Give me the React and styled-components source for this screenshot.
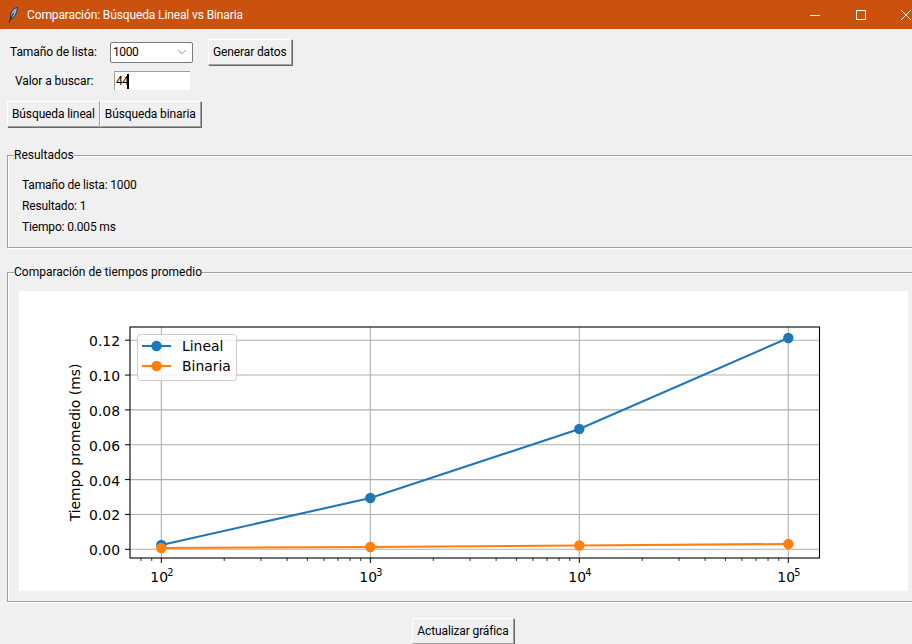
import React from 'react';
import styled, { createGlobalStyle } from 'styled-components';
import { ChevronDown } from 'lucide-react';

const GlobalStyle = createGlobalStyle`
  html, body {
    margin: 0;
    height: 100%;
    overflow: hidden;
    background: #f0f0f0;
  }
`;

const Window = styled.div`
  width: 912px;
  height: 644px;
  overflow: hidden;
  background: #f0f0f0;
  color: #000;
  font-family: Roboto, "Liberation Sans", sans-serif;
  font-size: 12px;
`;

const TitleBar = styled.div`
  height: 29px;
  background: #ca510e;
  color: #fff;
  display: flex;
  align-items: center;
  padding-left: 8px;
  margin-right: -17px;
`;

const TitleText = styled.span`
  margin-left: 9px;
  flex: 1;
  letter-spacing: -0.12px;
`;

const WindowButton = styled.div`
  width: 45.5px;
  height: 29px;
  display: flex;
  align-items: center;
  justify-content: center;
`;

const Controls = styled.div`
  padding: 10px 0 0 7px;
  display: flex;
  flex-direction: column;
`;

const Row = styled.div`
  display: flex;
  align-items: center;
  margin-top: ${(p) => p.$top || 0}px;
`;

const FieldLabel = styled.label`
  box-sizing: border-box;
  width: ${(p) => p.$width}px;
  padding-left: ${(p) => p.$indent}px;
  letter-spacing: -0.08px;
`;

const Combo = styled.div`
  width: 83px;
  height: 21px;
  box-sizing: border-box;
  border: 1px solid #7a7a7a;
  border-radius: 2px;
  background: #fff;
  display: flex;
  align-items: center;
  justify-content: space-between;
  padding: 0 3px 0 2px;
  letter-spacing: -0.4px;
`;

const Button = styled.button`
  height: 26px;
  box-sizing: border-box;
  padding: 0 4px;
  margin-left: ${(p) => p.$left || 0}px;
  font: inherit;
  letter-spacing: -0.12px;
  color: #000;
  background: #f0f0f0;
  border: 1px solid;
  border-color: #fff #a0a0a0 #a0a0a0 #fff;
  box-shadow: 1px 1px 0 #696969;
  white-space: nowrap;
`;

const Entry = styled.div`
  width: 76px;
  height: 19px;
  box-sizing: border-box;
  background: #fff;
  border-top: 1px solid #a0a0a0;
  border-left: 1px solid #a0a0a0;
  padding-left: 1px;
  display: flex;
  align-items: center;
  letter-spacing: -0.4px;
`;

const Caret = styled.span`
  width: 2px;
  height: 15px;
  margin-left: -2px;
  background: #000;
`;

const Group = styled.fieldset`
  box-sizing: border-box;
  width: 920px;
  height: ${(p) => p.$height}px;
  margin: ${(p) => p.$top}px 0 0 7px;
  padding: 0;
  border: 0;
  border-top: 1px solid #a0a0a0;
  border-left: 1px solid #a0a0a0;
  border-bottom: 1px solid #a0a0a0;
  box-shadow: inset 1px 1px 0 #fff, 0 1px 0 #fff;
  min-width: 0;
`;

const GroupLegend = styled.legend`
  margin-left: 6px;
  padding: 0;
  line-height: 14px;
`;

const ResultList = styled.div`
  padding: 16px 0 0 14px;
  display: flex;
  flex-direction: column;
  gap: 6px;
  line-height: 15px;
  letter-spacing: -0.16px;
`;

const ChartPanel = styled.div`
  width: 889px;
  height: 300px;
  margin: 12px 0 0 11px;
  background: #fff;
`;

const Footer = styled.div`
  display: flex;
  justify-content: center;
  margin-top: 16px;
  padding-left: 14px;
`;

const Feather = () => (
  <svg width="10" height="16" viewBox="0 0 10 16">
    <path d="M9.5 .5C6 1 3 4 2.5 9L2.5 12C6 11 9 7 9.5 .5Z" fill="#7fb4e6" stroke="#14202c" strokeWidth="0.8" />
    <path d="M1 15.5L5.5 6" stroke="#14202c" strokeWidth="1" fill="none" />
  </svg>
);

const X_TICKS = [
  { x: 161.3, exp: 2 },
  { x: 370.3, exp: 3 },
  { x: 579.3, exp: 4 },
  { x: 788.3, exp: 5 },
];
const Y_TICKS = ['0.00', '0.02', '0.04', '0.06', '0.08', '0.10', '0.12'];
const y0 = 549.3 - 291;
const yStep = 34.85;
const decade = 209;
const ox = -19;

const LINEAL = [[161.3, 545], [370.3, 498], [579.3, 429], [788.3, 338]];
const BINARIA = [[161.3, 548], [370.3, 547], [579.3, 545.5], [788.3, 544]];

const minorTicks = [];
[-1, 0, 1, 2, 3].forEach((d) => {
  for (let m = 2; m < 10; m++) {
    const x = 161.3 + (d + Math.log10(m)) * decade;
    if (x > 130 && x < 819.5) minorTicks.push(x);
  }
});

const Series = ({ data, color }) => (
  <g>
    <polyline
      points={data.map(([x, y]) => `${x + ox},${y - 291}`).join(' ')}
      fill="none"
      stroke={color}
      strokeWidth="2.1"
    />
    {data.map(([x, y]) => (
      <circle key={x} cx={x + ox} cy={y - 291} r="5.2" fill={color} />
    ))}
  </g>
);

const Chart = () => (
  <svg width="889" height="300" viewBox="0 0 889 300" fontFamily="'DejaVu Sans', sans-serif" fill="#000">
    {X_TICKS.map((t) => (
      <line key={t.x} x1={t.x + ox} x2={t.x + ox} y1="36" y2="267" stroke="#b0b0b0" strokeWidth="1.1" />
    ))}
    {Y_TICKS.map((_, i) => (
      <line key={i} x1="111" x2="800.5" y1={y0 - i * yStep} y2={y0 - i * yStep} stroke="#b0b0b0" strokeWidth="1.1" />
    ))}
    <Series data={LINEAL} color="#1f77b4" />
    <Series data={BINARIA} color="#ff7f0e" />
    <rect x="111" y="36" width="689.5" height="231" fill="none" stroke="#000" strokeWidth="1.1" />
    {minorTicks.map((x) => (
      <line key={x} x1={x + ox} x2={x + ox} y1="267" y2="270" stroke="#000" strokeWidth="0.8" />
    ))}
    {X_TICKS.map((t) => (
      <g key={t.exp}>
        <line x1={t.x + ox} x2={t.x + ox} y1="267" y2="272" stroke="#000" strokeWidth="1" />
        <text x={t.x + ox - 11} y="291" fontSize="13.9">10</text>
        <text x={t.x + ox + 6} y="285" fontSize="9.7">{t.exp}</text>
      </g>
    ))}
    {Y_TICKS.map((label, i) => (
      <g key={label}>
        <line x1="106" x2="111" y1={y0 - i * yStep} y2={y0 - i * yStep} stroke="#000" strokeWidth="1" />
        <text x="101" y={y0 - i * yStep + 6} fontSize="13.9" textAnchor="end">{label}</text>
      </g>
    ))}
    <text transform="translate(61 151.5) rotate(-90)" fontSize="13.9" textAnchor="middle">Tiempo promedio (ms)</text>
    <rect x="118.5" y="43.5" width="99" height="46" rx="3" fill="#fff" fillOpacity="0.8" stroke="#ccc" strokeWidth="1" />
    <line x1="123" x2="152" y1="55" y2="55" stroke="#1f77b4" strokeWidth="2.1" />
    <circle cx="137.5" cy="55" r="5.2" fill="#1f77b4" />
    <text x="163" y="60" fontSize="13.9">Lineal</text>
    <line x1="123" x2="152" y1="75" y2="75" stroke="#ff7f0e" strokeWidth="2.1" />
    <circle cx="137.5" cy="75" r="5.2" fill="#ff7f0e" />
    <text x="163" y="80" fontSize="13.9">Binaria</text>
  </svg>
);

export default function App() {
  return (
    <Window>
      <GlobalStyle />
      <TitleBar>
        <Feather />
        <TitleText>Comparación: Búsqueda Lineal vs Binaria</TitleText>
        <WindowButton>
          <svg width="10" height="10" viewBox="0 0 10 10"><path d="M0 5.5H10" stroke="#fff" /></svg>
        </WindowButton>
        <WindowButton>
          <svg width="10" height="10" viewBox="0 0 10 10"><rect x="0.5" y="0.5" width="9" height="9" fill="none" stroke="#fff" /></svg>
        </WindowButton>
        <WindowButton>
          <svg width="10" height="10" viewBox="0 0 10 10"><path d="M0 0L10 10M10 0L0 10" stroke="#fff" /></svg>
        </WindowButton>
      </TitleBar>
      <Controls>
        <Row>
          <FieldLabel $width={103} $indent={3}>Tamaño de lista:</FieldLabel>
          <Combo>
            <span>1000</span>
            <ChevronDown size={14} strokeWidth={1} color="#444" />
          </Combo>
          <Button $left={15}>Generar datos</Button>
        </Row>
        <Row $top={6}>
          <FieldLabel $width={107} $indent={8}>Valor a buscar:</FieldLabel>
          <Entry>44<Caret /></Entry>
        </Row>
        <Row $top={11}>
          <Button>Búsqueda lineal</Button>
          <Button>Búsqueda binaria</Button>
        </Row>
      </Controls>
      <Group $top={21} $height={100}>
        <GroupLegend>Resultados</GroupLegend>
        <ResultList>
          <span>Tamaño de lista: 1000</span>
          <span>Resultado: 1</span>
          <span>Tiempo: 0.005 ms</span>
        </ResultList>
      </Group>
      <Group $top={17} $height={337}>
        <GroupLegend>Comparación de tiempos promedio</GroupLegend>
        <ChartPanel>
          <Chart />
        </ChartPanel>
      </Group>
      <Footer>
        <Button>Actualizar gráfica</Button>
      </Footer>
    </Window>
  );
}
